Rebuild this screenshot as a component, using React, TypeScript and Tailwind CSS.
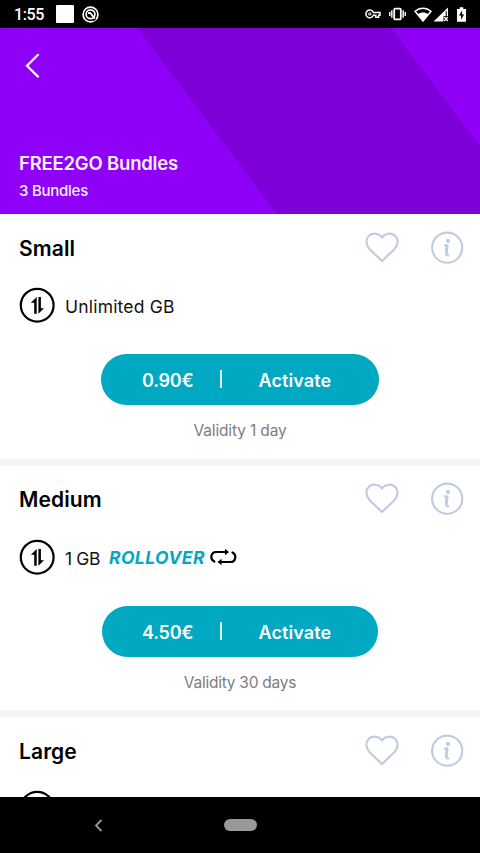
type Bundle = {
  name: string;
  data?: string;
  rollover?: boolean;
  price?: string;
  validity?: string;
  dataClass?: string;
  buttonClass?: string;
  validityClass?: string;
};

const bundles: Bundle[] = [
  {
    name: "Small",
    data: "Unlimited GB",
    price: "0.90€",
    validity: "Validity 1 day",
    dataClass: "tracking-[0.2px]",
    buttonClass: "w-[278px] pl-[41px]",
    validityClass: "tracking-[-0.15px]",
  },
  {
    name: "Medium",
    data: "1 GB",
    rollover: true,
    price: "4.50€",
    validity: "Validity 30 days",
    dataClass: "tracking-[-0.4px]",
    buttonClass: "w-[276px] pl-[40px]",
    validityClass: "tracking-[-0.25px]",
  },
  { name: "Large" },
];

function StatusBar() {
  return (
    <div className="flex h-7 shrink-0 items-center bg-black pl-[14px] pr-[14px] text-white">
      <span className="w-[42px] pt-[1px] font-['Roboto',sans-serif] text-[16px] font-medium leading-none tracking-[-0.4px]">1:55</span>
      <div className="h-[18px] w-[18px] rounded-[1px] bg-white" />
      <svg className="ml-2" width="17" height="17" viewBox="0 0 17 17" fill="none" stroke="white">
        <circle cx="8.5" cy="8.5" r="7.4" strokeWidth="1.7" />
        <circle cx="8.5" cy="8.3" r="4.4" strokeWidth="1.7" />
        <path d="M6 7.2l2.2-.3 5 6.1" strokeWidth="1.8" />
        <path d="M11.5 14.8l2.3-2.3" stroke="black" strokeWidth="1.2" />
      </svg>
      <svg className="ml-auto" width="16" height="10" viewBox="0 0 16 10" fill="none" stroke="white" strokeWidth="1.5">
        <path d="M8.4 3.5H15v2.8h-1.4v2h-2.8v-2H8.4A3.9 3.9 0 1 1 8.4 3.5z" />
        <circle cx="4.8" cy="5" r="1.2" strokeWidth="1" />
      </svg>
      <svg className="ml-2" width="17" height="14" viewBox="0 0 18 14" fill="none" stroke="white">
        <rect x="5.5" y="1.3" width="7" height="11.4" rx="1" strokeWidth="1.9" />
        <path d="M3 3v8M15 3v8" strokeWidth="1.5" />
        <path d="M.8 5v4M17.2 5v4" strokeWidth="1.5" />
      </svg>
      <svg className="ml-2" width="18" height="15" viewBox="0 0 18 15" fill="none">
        <path d="M1 4.3C5.7.1 12.3.1 17 4.3L9 14z" stroke="white" strokeWidth="1.5" />
        <path d="M3.6 7.2C7 5 11 5 14.4 7.2L9 14z" fill="white" />
      </svg>
      <svg className="ml-[1px]" width="16" height="15" viewBox="0 0 16 15" fill="none">
        <path d="M15 .5v8.5h-4.5v5.5H.5z" fill="white" />
        <path d="M13.2 4v5" stroke="black" strokeWidth="1" />
        <path d="M11.3 10l3.5 4M14.8 10l-3.5 4" stroke="white" strokeWidth="1.2" />
      </svg>
      <svg className="ml-2" width="9" height="15" viewBox="0 0 10 16">
        <path d="M3 0h4v2h3v14H0V2h3z" fill="white" />
        <path d="M5.6 3.5L2.2 9h2.3v4.8L7.9 8H5.6z" fill="black" />
      </svg>
    </div>
  );
}

function Header() {
  return (
    <header className="relative flex h-[186px] shrink-0 flex-col bg-[#8f00f7] pl-[19px] text-[#f9efff]">
      <svg className="absolute inset-0" width="480" height="186" viewBox="0 0 480 186">
        <path d="M137 0H391L480 118V186H277z" fill="#7e00d9" />
      </svg>
      <svg className="relative ml-[6px] mt-[25px]" width="15" height="26" viewBox="0 0 15 26" fill="none" stroke="white" strokeWidth="2.2">
        <path d="M13 1.8L2 12.7l11 10.9" strokeLinecap="round" />
      </svg>
      <h1 className="relative mt-[72px] whitespace-nowrap text-[18.5px] font-semibold leading-[24px] tracking-[-0.2px]">FREE2GO Bundles</h1>
      <p className="relative mt-[6px] text-[15px] font-medium leading-5 tracking-[-0.25px]">3 Bundles</p>
    </header>
  );
}

function HeartIcon() {
  return (
    <svg width="34" height="32" viewBox="0 0 34 32" fill="none" stroke="#c0cbe0" strokeWidth="2.1">
      <path d="M17 29L4.600 17.200C.4 12.900.6 7 3.900 3.800 7.700.5 13.700 1 17 5.500c3.300-4.500 9.300-5 13.100-1.700 3.300 3.200 3.500 9.100-.7 13.400z" />
    </svg>
  );
}

function InfoIcon() {
  return (
    <svg width="34" height="34" viewBox="0 0 34 34" fill="none">
      <circle cx="17.2" cy="16.7" r="15.1" stroke="#c0cbe0" strokeWidth="2.1" />
      <circle cx="18" cy="9.900" r="2.1" fill="#c0cbe0" />
      <path d="M14 14.600h2.900l-.7 8.200c-.1 1.700 1 2.100 2.900 1.200" stroke="#c0cbe0" strokeWidth="2" />
      <path d="M17.100 13.600l-.8 9.600" stroke="#c0cbe0" strokeWidth="2.800" />
    </svg>
  );
}

function DataIcon() {
  return (
    <svg width="36" height="36" viewBox="0 0 36 36" fill="none">
      <circle cx="18.2" cy="18.2" r="16.4" stroke="black" strokeWidth="2.2" />
      <path d="M17.700 10v16.800h-2.500V15.700h-3.300z" fill="black" />
      <path d="M19.400 10h2.500v11.300h3.100l-5.600 5.500z" fill="black" />
    </svg>
  );
}

function RolloverIcon() {
  return (
    <svg width="27" height="18" viewBox="0 0 27 18" fill="none" stroke="black" strokeWidth="2.2">
      <path d="M4.300 13.500C-.5 11 1 4 6 4h11" strokeLinecap="round" />
      <path d="M22.500 4.500c4.700 2.500 3 9.500-2 9.500H9.500" strokeLinecap="round" />
      <path d="M15 .8L19 4l-4 3.200zM11.500 10.800l-4 3.200 4 3.200z" fill="black" stroke="none" />
    </svg>
  );
}

function BundleCard({ bundle }: { bundle: Bundle }) {
  return (
    <section className="flex h-[251.7px] shrink-0 flex-col border-b-[7px] border-[#f4f4f4] bg-white">
      <div className="flex h-[67px] shrink-0 items-center pl-[19px] pr-4">
        <h2 className="pt-[2.5px] text-[21px] font-semibold leading-7 tracking-[0.1px] text-black">{bundle.name}</h2>
        <button className="ml-auto"><HeartIcon /></button>
        <button className="ml-[31px]"><InfoIcon /></button>
      </div>
      <div className="flex h-[48px] shrink-0 items-center pl-[19px]">
        <DataIcon />
        {bundle.data && (
          <span className={`ml-[10px] whitespace-nowrap pt-[4px] text-[17.5px] text-[#111] ${bundle.dataClass}`}>{bundle.data}</span>
        )}
        {bundle.rollover && (
          <>
            <span className="ml-[9px] w-[101px] whitespace-nowrap pt-[2px] text-[17.5px] font-bold italic tracking-[0.45px] text-[#00a8c1]">ROLLOVER</span>
            <RolloverIcon />
          </>
        )}
      </div>
      {bundle.price && (
        <button className={`mx-auto mt-[25.4px] flex h-[51px] shrink-0 items-center rounded-full bg-[#00a8c1] pt-[1px] text-[18px] font-semibold text-white ${bundle.buttonClass}`}>
          <span className="w-[78px] text-left tracking-[-0.2px]">{bundle.price}</span>
          <span className="mb-[2px] h-[18px] w-[1.5px] bg-[#d5f1f5]" />
          <span className="ml-[37px] tracking-[0.1px]">Activate</span>
        </button>
      )}
      {bundle.validity && (
        <p className={`mt-[14px] text-center text-[15.5px] leading-6 text-[#7d7d7d] ${bundle.validityClass}`}>{bundle.validity}</p>
      )}
    </section>
  );
}

function NavigationBar() {
  return (
    <nav className="grid h-14 shrink-0 grid-cols-[196px_88px_196px] items-center bg-black">
      <svg className="mx-auto" width="9" height="13" viewBox="0 0 9 13" fill="none" stroke="#999" strokeWidth="1.8">
        <path d="M7.5 1L2 6.5 7.5 12" />
      </svg>
      <div className="mx-auto h-3 w-[33px] rounded-full bg-[#999]" />
    </nav>
  );
}

export default function App() {
  return (
    <div className="flex h-[853px] w-[480px] flex-col overflow-hidden bg-white font-['Inter',sans-serif]">
      <StatusBar />
      <Header />
      <main className="min-h-0 flex-1 overflow-hidden">
        {bundles.map((bundle) => (
          <BundleCard key={bundle.name} bundle={bundle} />
        ))}
      </main>
      <NavigationBar />
    </div>
  );
}
